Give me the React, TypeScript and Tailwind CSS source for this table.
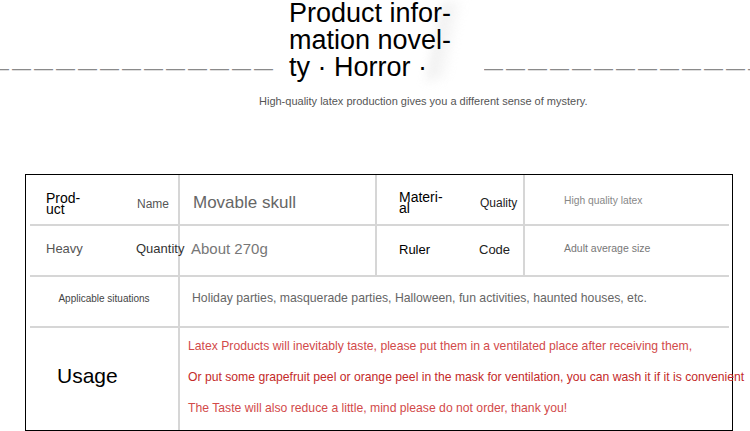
import React from "react";

const line = "border-[#d6d6d6]";

const App = () => {
  return (
    <div className="w-[750px] h-[431px] bg-white overflow-hidden font-['Liberation_Sans',Arial,sans-serif]">
      {/* heading */}
      <div className="relative flex items-start h-[94px]">
        <div className="w-[276px] pt-[56px] overflow-hidden whitespace-nowrap text-[19px] leading-[24px] tracking-[3px] text-[#8a8a8a] flex justify-end">
          <span>—————————————</span>
        </div>
        <div className="relative w-[208px] pl-[13px]">
          <div className="absolute left-[158px] top-[2px] w-[24px] h-[78px] bg-gradient-to-r from-[#e2e2e2] to-transparent blur-[5px] opacity-60 -skew-x-12" />
          <h1 className="relative text-[27px] leading-[27px] text-black font-normal">
            Product infor-
            <br />
            mation novel-
            <br />
            ty · Horror ·
          </h1>
        </div>
        <div className="flex-1 pt-[56px] overflow-hidden whitespace-nowrap text-[19px] leading-[24px] tracking-[3px] text-[#8a8a8a]">
          —————————————
        </div>
      </div>
      <p className="pl-[259px] text-[11px] leading-[14px] text-[#555]">
        High-quality latex production gives you a different sense of mystery.
      </p>

      {/* spec table */}
      <div className="ml-[25px] mt-[66px] w-[708px] h-[257px] border border-black pl-[4px] pr-[3px]">
        <div className={`flex h-[51px] border-b-2 ${line}`}>
          <div className={`w-[150px] shrink-0 border-r-2 ${line} flex items-center pt-[8px]`}>
            <span className="w-[107px] shrink-0 pl-[16px] text-[14px] leading-[11px] text-black">
              Prod-
              <br />
              uct
            </span>
            <span className="text-[12px] text-[#555]">Name</span>
          </div>
          <div className={`w-[197px] shrink-0 border-r-2 ${line} flex items-center pl-[13px] pt-[7px] text-[17px] text-[#666]`}>
            Movable skull
          </div>
          <div className={`w-[148px] shrink-0 border-r-2 ${line} flex items-center pt-[7px]`}>
            <span className="w-[103px] shrink-0 pl-[22px] text-[14px] leading-[11px] text-black">
              Materi-
              <br />
              al
            </span>
            <span className="text-[12px] text-[#222]">Quality</span>
          </div>
          <div className="flex-1 min-w-0 flex items-center pl-[39px] pt-[3px] text-[10.3px] text-[#888]">
            High quality latex
          </div>
        </div>

        <div className={`flex h-[51px] border-b-2 ${line}`}>
          <div className={`w-[150px] shrink-0 border-r-2 ${line} flex items-center pb-[3px]`}>
            <span className="w-[106px] shrink-0 pl-[16px] text-[13px] text-[#555]">Heavy</span>
            <span className="text-[13px] text-[#333] whitespace-nowrap">Quantity</span>
          </div>
          <div className={`w-[197px] shrink-0 border-r-2 ${line} flex items-center pl-[11px] pb-[3px] text-[15px] text-[#777]`}>
            About 270g
          </div>
          <div className={`w-[148px] shrink-0 border-r-2 ${line} flex items-center pb-[1px]`}>
            <span className="w-[102px] shrink-0 pl-[22px] text-[13px] text-black">Ruler</span>
            <span className="text-[13px] text-[#222]">Code</span>
          </div>
          <div className="flex-1 min-w-0 flex items-center pl-[39px] pb-[3px] text-[10.5px] text-[#777]">
            Adult average size
          </div>
        </div>

        <div className={`flex h-[51px] border-b-2 ${line}`}>
          <div className={`w-[150px] shrink-0 border-r-2 ${line} flex items-center justify-center pb-[6px] text-[10px] text-[#444]`}>
            Applicable situations
          </div>
          <div className="flex-1 min-w-0 flex items-center pl-[12px] pb-[6px] text-[12.25px] text-[#666]">
            Holiday parties, masquerade parties, Halloween, fun activities, haunted houses, etc.
          </div>
        </div>

        <div className="flex h-[102px]">
          <div className={`w-[150px] shrink-0 border-r-2 ${line} flex items-center pl-[27px] pb-[6px] text-[21px] text-black`}>
            Usage
          </div>
          <div className="flex-1 min-w-0 flex flex-col gap-[17px] pl-[8px] pt-[11px] text-[12.2px] leading-[14px] whitespace-nowrap">
            <p className="text-[#d24a4a]">
              Latex Products will inevitably taste, please put them in a ventilated place after receiving them,
            </p>
            <p className="text-[#c42a2a]">
              Or put some grapefruit peel or orange peel in the mask for ventilation, you can wash it if it is convenient
            </p>
            <p className="text-[#d24a4a]">
              The Taste will also reduce a little, mind please do not order, thank you!
            </p>
          </div>
        </div>
      </div>
    </div>
  );
};

export default App;
